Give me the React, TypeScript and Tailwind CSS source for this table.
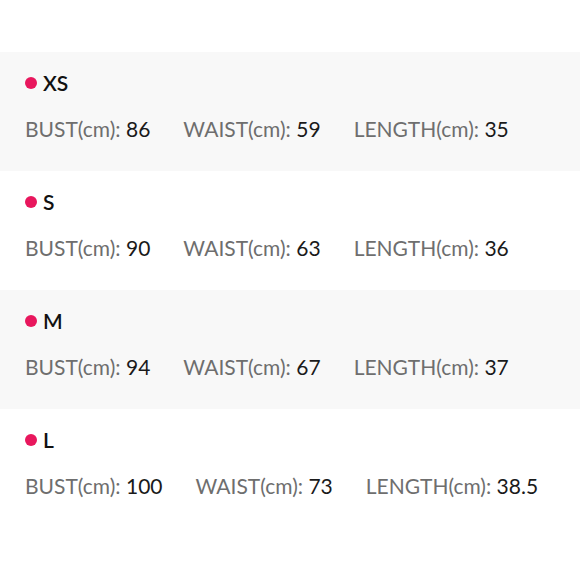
import React from "react";

const sizes = [
  { size: "XS", bust: "86", waist: "59", length: "35" },
  { size: "S", bust: "90", waist: "63", length: "36" },
  { size: "M", bust: "94", waist: "67", length: "37" },
  { size: "L", bust: "100", waist: "73", length: "38.5" },
];

function Measure({ label, value }: { label: string; value: string }) {
  return (
    <span className="whitespace-nowrap">
      <span className="text-[#6e6e6e]">{label}(cm): </span>
      <span className="text-[#1a1a1a]">{value}</span>
    </span>
  );
}

export default function App() {
  return (
    <div
      className="w-[580px] h-[580px] bg-white pt-[52px]"
      style={{ fontFamily: "Lato, 'Open Sans', sans-serif" }}
    >
      {sizes.map((s, i) => (
        <div
          key={s.size}
          className={`h-[119px] px-[25px] pt-[20px] ${i % 2 === 0 ? "bg-[#f8f8f8]" : "bg-white"}`}
        >
          {/* size title */}
          <div className="flex items-center h-[22px] gap-[6px]">
            <span className="w-[12px] h-[12px] rounded-full bg-[#e8175d]" />
            <span className="text-[21px] font-semibold text-[#111]">{s.size}</span>
          </div>

          {/* measurements */}
          <div className="flex items-center h-[24px] mt-[23px] gap-[33px] text-[21px] leading-[24px]">
            <Measure label="BUST" value={s.bust} />
            <Measure label="WAIST" value={s.waist} />
            <Measure label="LENGTH" value={s.length} />
          </div>
        </div>
      ))}
    </div>
  );
}
